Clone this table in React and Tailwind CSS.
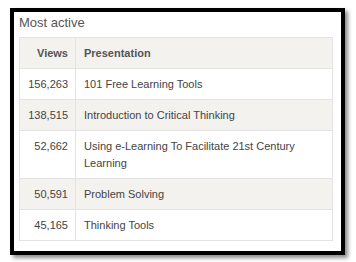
import React from 'react';

const rows = [
    { views: '156,263', title: '101 Free Learning Tools' },
    { views: '138,515', title: 'Introduction to Critical Thinking' },
    { views: '52,662', title: 'Using e-Learning To Facilitate 21st Century Learning' },
    { views: '50,591', title: 'Problem Solving' },
    { views: '45,165', title: 'Thinking Tools' },
];

const App = () => {
    return (
        <div className="w-[356px] h-[262px] bg-white pt-[8px] pl-[10px] font-['Liberation_Sans',Arial,sans-serif]">
            <div className="w-[335px] h-[247px] border-4 border-black bg-white shadow-[3px_3px_4px_rgba(0,0,0,0.45)] pl-[5px] pr-[8px] pt-[3px]">
                {/* Title */}
                <div className="text-[13px] leading-[16px] text-[#555] mb-[6px]">Most active</div>

                <table className="w-full border-collapse border border-[#e3e3e3] text-[11px] text-[#444]">
                    <thead>
                        <tr className="bg-[#f3f2ee]">
                            <th className="w-[56px] border border-[#e3e3e3] pr-[7px] pt-[7px] pb-[6px] leading-[17px] text-right font-bold text-[#555]">Views</th>
                            <th className="border border-[#e3e3e3] pl-[8px] pt-[7px] pb-[6px] leading-[17px] text-left font-bold text-[#555]">Presentation</th>
                        </tr>
                    </thead>
                    <tbody>
                        {rows.map((r, i) => (
                            <tr key={r.views} className={i % 2 === 1 ? 'bg-[#f3f2ee]' : 'bg-white'}>
                                <td className="border border-[#e3e3e3] pr-[7px] pt-[7px] pb-[6px] leading-[17px] text-right align-top">{r.views}</td>
                                <td className="border border-[#e3e3e3] pl-[8px] pr-[6px] pt-[7px] pb-[6px] leading-[17px] align-top">{r.title}</td>
                            </tr>
                        ))}
                    </tbody>
                </table>
            </div>
        </div>
    );
};

export default App;
